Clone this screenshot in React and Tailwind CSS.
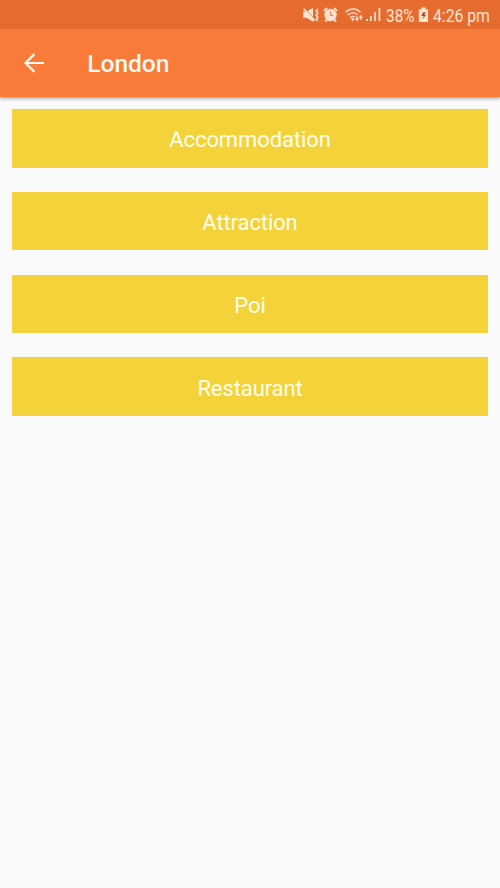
const categories = ["Accommodation", "Attraction", "Poi", "Restaurant"];

function MuteIcon() {
  return (
    <svg className="ml-[303px] h-[29px] w-4 shrink-0" viewBox="0 0 16 29" fill="none">
      <path d="M0.2 11.8h3.3L10 7.8v14L3.5 17.8H0.2z" fill="#fde3d0" />
      <path d="M1.6 8.3 12 19.2" stroke="#e66b2f" strokeWidth="0.6" />
      <path d="M0.6 8.8 11.6 20.6" stroke="#fde3d0" strokeWidth="1.6" />
      <path d="M14.8 9l-1.6 2 1.6 2.1-1.6 2 1.6 2.1-1.6 2 1.2 1.8" stroke="#fde3d0" strokeWidth="1.6" />
    </svg>
  );
}

function AlarmIcon() {
  return (
    <svg className="ml-1 h-[29px] w-4 shrink-0" viewBox="0 0 16 29" fill="none">
      <circle cx="7.5" cy="15" r="6.2" fill="#fde3d0" />
      <path d="M.8 10.8 4.2 8M10.8 8l3.4 2.8M3.8 19.6 2.3 21.6M11.4 19.6l1.5 2" stroke="#fde3d0" strokeWidth="1.9" />
      <path d="M7.5 11.5v4h2.9" stroke="#e9804c" strokeWidth="1" />
    </svg>
  );
}

function WifiIcon() {
  return (
    <svg className="ml-1.5 h-[29px] w-[19px] shrink-0" viewBox="0 0 19 29" fill="none">
      <path d="M0.5 12.2a10.5 10.5 0 0 1 15 0M2.8 14.9a7.3 7.3 0 0 1 9.6-.5M5.2 17.5a4 4 0 0 1 4.6-.6" stroke="#fde3d0" strokeWidth="1.4" />
      <path d="M5.9 18.9a3 3 0 0 1 3.6-.3L8 21.2z" fill="#fde3d0" />
      <path d="M10 18.2h1.5v-2.4h1.2v2.4h1.5L12.1 21.4zM13.8 17.8l2.1-3 2.1 3h-1.5v2.2h-1.2v-2.2z" fill="#fde3d0" />
    </svg>
  );
}

function SignalIcon() {
  return (
    <svg className="ml-[2px] h-[29px] w-[15px] shrink-0" viewBox="0 0 15 29" fill="#fde3d0">
      <path d="M0 19h2v2H0zM4 16h1.6v5H4zM8.2 12h1.6v9H8.2zM12.6 8h1.7v13h-1.7z" />
    </svg>
  );
}

function BatteryIcon() {
  return (
    <svg className="absolute left-[418px] top-0 h-[29px] w-[11px]" viewBox="0 0 11 29">
      <path d="M3.2 7.5h4.4v1.7h2.4V22H.8V9.2h2.4z" fill="#fde3d0" />
      <path d="M7.9 12.3H5L3.4 16h2.3l-1.5 3.5 4-4.8H6.2z" fill="#a8481f" />
    </svg>
  );
}

export default function App() {
  return (
    <div className="flex h-[888px] w-[500px] flex-col overflow-hidden bg-[#fafafa] font-[Roboto,sans-serif]">
      <div className="relative z-10 flex h-[29px] shrink-0 bg-[#e66b2f] text-[#fde3d0]">
        <MuteIcon />
        <AlarmIcon />
        <WifiIcon />
        <SignalIcon />
        <span className="ml-[5px] w-[29px] origin-left scale-x-[0.84] whitespace-nowrap text-[18.3px] leading-[31px]">38%</span>
        <BatteryIcon />
        <span className="ml-[18px] origin-left scale-x-[0.86] whitespace-nowrap text-[18.3px] leading-[31px]">4:26 pm</span>
      </div>
      <header className="relative flex h-[68px] shrink-0 items-center bg-[#f97b39] shadow-[0_1px_4px_rgba(0,0,0,0.45)]">
        <svg className="ml-[24px] h-5 w-5" viewBox="0 0 20 20" fill="none" stroke="#fff8ef" strokeWidth="2.2">
          <path d="M20 10H2M10.4 1.1 1.5 10l8.9 8.9" />
        </svg>
        <h1 className="ml-[43.3px] pt-px text-[24.5px] font-medium leading-8 text-[#fffaf3]">London</h1>
      </header>
      <main className="flex flex-col gap-[24.2px] px-3 pt-3">
        {categories.map((name) => (
          <button key={name} className="flex h-[58.6px] items-center justify-center bg-[#f4d33a] pt-1 text-[22px] leading-7 tracking-[-0.1px] text-[#fffdf0]">
            {name}
          </button>
        ))}
      </main>
    </div>
  );
}
